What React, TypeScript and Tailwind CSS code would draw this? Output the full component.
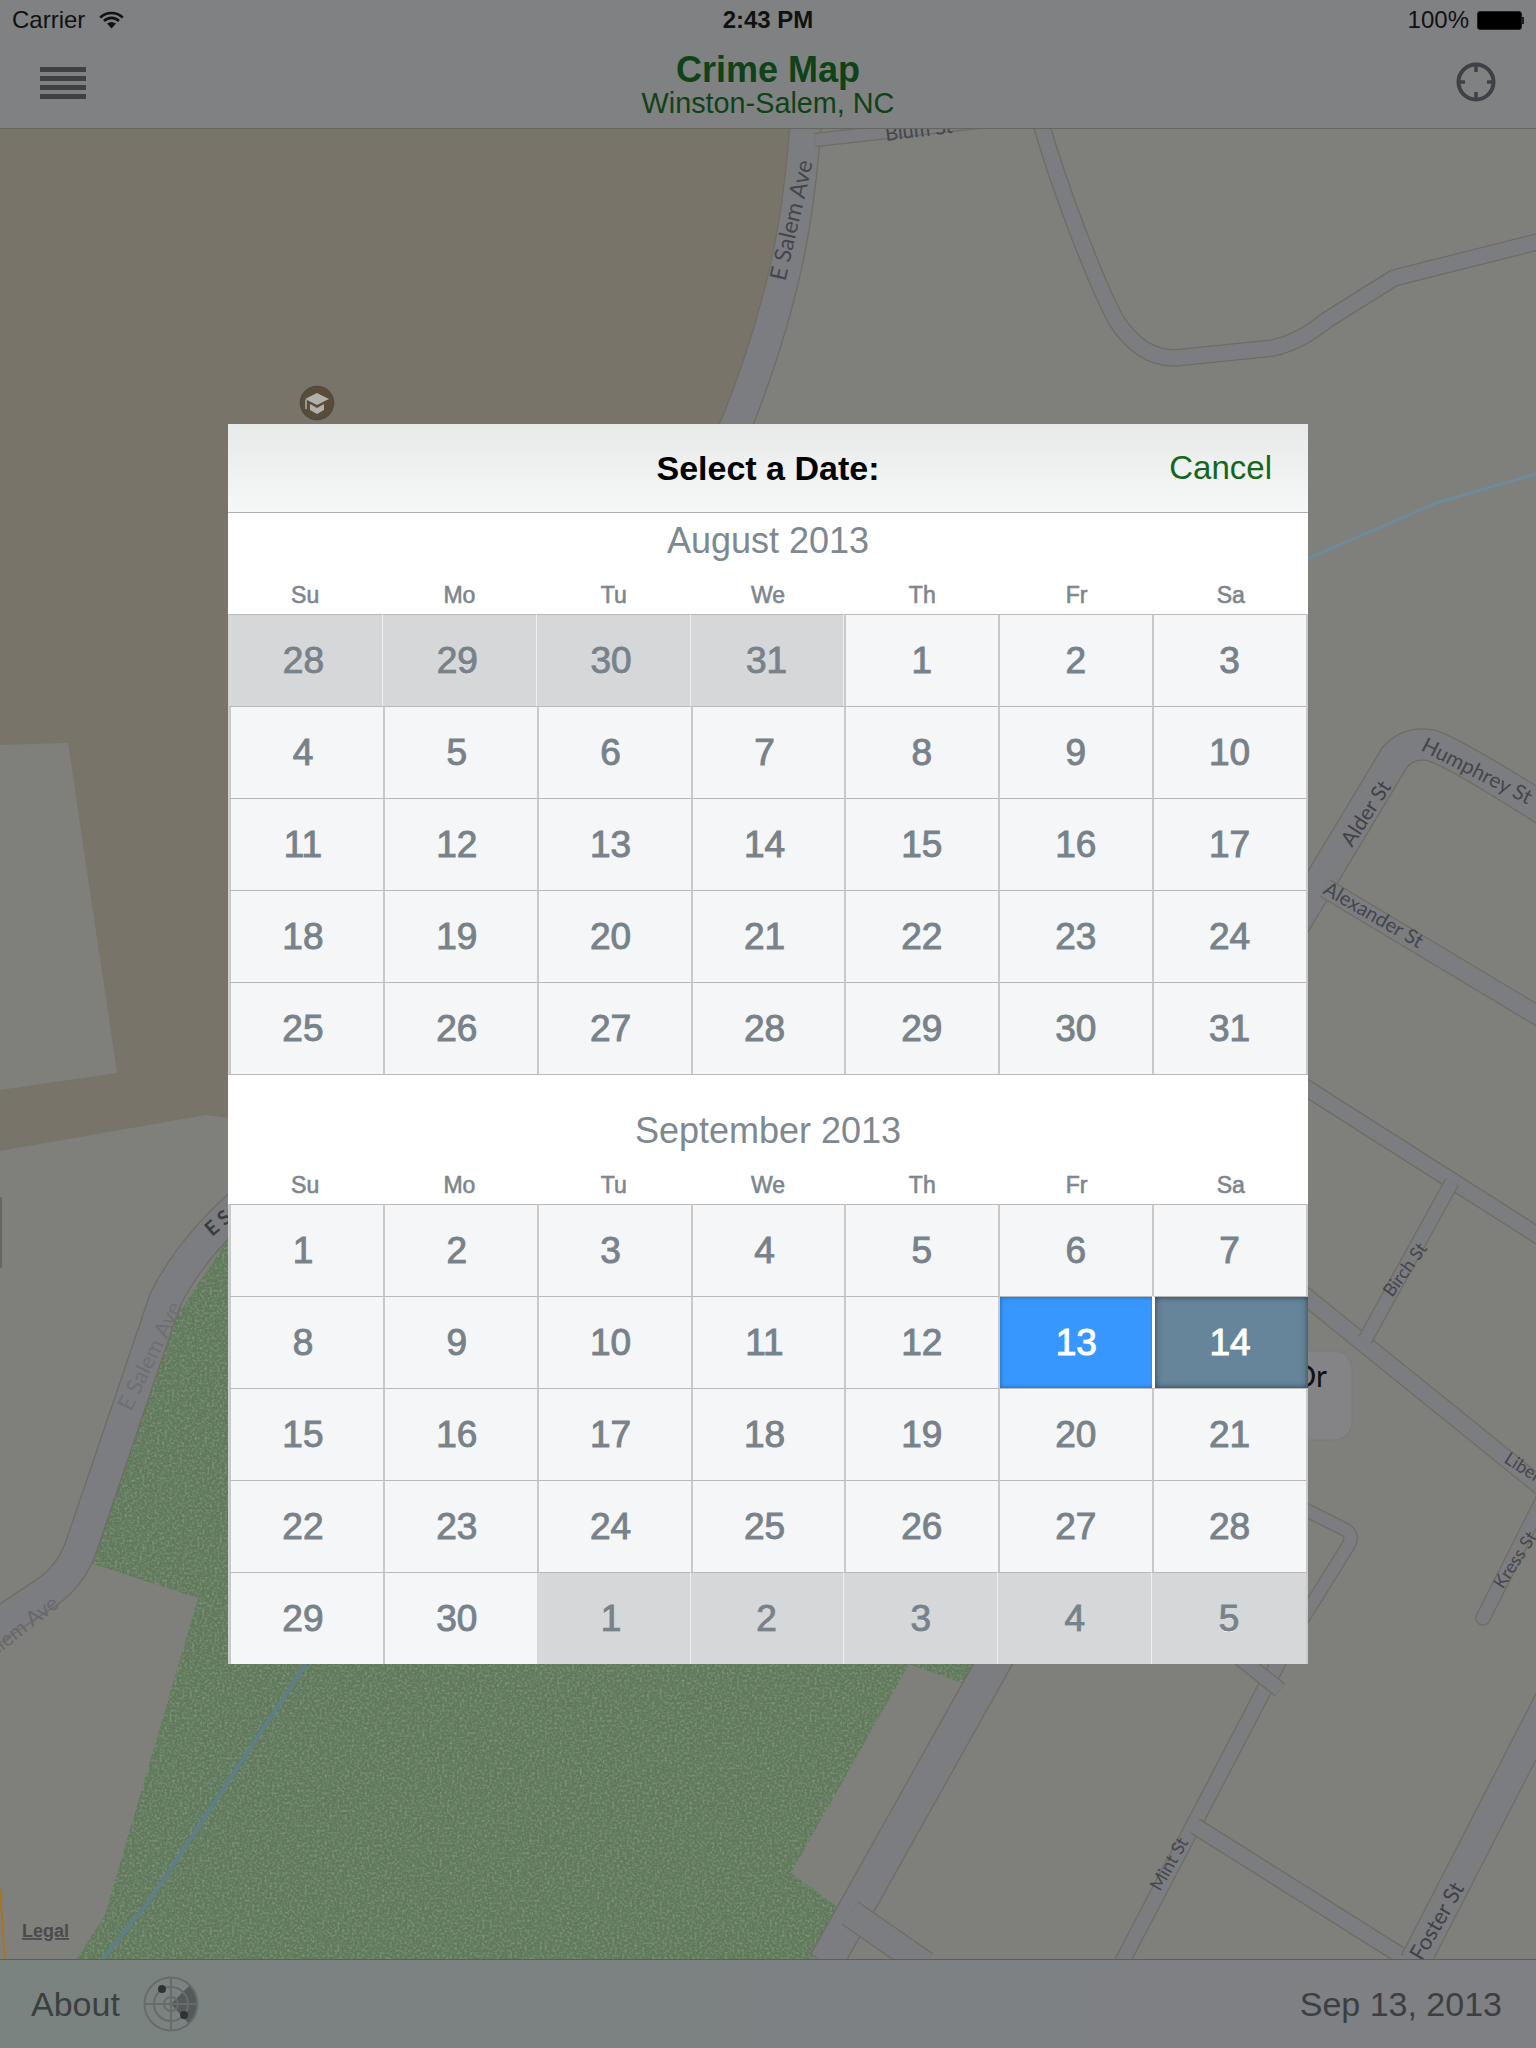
import React from 'react';

type CellKind = 'day' | 'out' | 'start' | 'end';

interface Cell {
  label: number;
  kind: CellKind;
}

const WEEKDAYS = ['Su', 'Mo', 'Tu', 'We', 'Th', 'Fr', 'Sa'];

// digits in the reference sit a touch left of centre, more so on the left side
const DAY_PAD = ['pr-[8px]', 'pr-[8px]', 'pr-[8px]', 'pr-[8px]', 'pr-[1px]', 'pr-[1px]', 'pr-[1px]'];
const OUT_PAD = ['pr-[4px]', 'pr-[4px]', 'pr-[4px]', 'pr-[1px]', 'pr-0', 'pr-0', 'pr-0'];

const range = (from: number, to: number, kind: CellKind = 'day'): Cell[] =>
  Array.from({ length: to - from + 1 }, (_, i) => ({ label: from + i, kind }));

const AUGUST: Cell[] = [...range(28, 31, 'out'), ...range(1, 31)];

const SEPTEMBER: Cell[] = [
  ...range(1, 12),
  { label: 13, kind: 'start' },
  { label: 14, kind: 'end' },
  ...range(15, 30),
  ...range(1, 5, 'out'),
];

const Road = ({ d, w, cap = 'butt' }: { d: string; w: number; cap?: 'butt' | 'round' }) => (
  <>
    <path d={d} fill="none" stroke="#6f6c64" strokeWidth={w + 2.5} strokeLinecap={cap} strokeLinejoin="round" />
    <path d={d} fill="none" stroke="#7c7d81" strokeWidth={w} strokeLinecap={cap} strokeLinejoin="round" />
  </>
);

const Label = ({
  x,
  y,
  r,
  size = 20,
  text,
  fill = '#44464c',
  anchor = 'start',
  bold = false,
}: {
  x: number;
  y: number;
  r: number;
  size?: number;
  text: string;
  fill?: string;
  anchor?: 'start' | 'middle' | 'end';
  bold?: boolean;
}) => (
  <text
    transform={`translate(${x} ${y}) rotate(${r})`}
    fontSize={size}
    fill={fill}
    textAnchor={anchor}
    fontWeight={bold ? 700 : 400}
    className="font-['Lato',sans-serif]"
  >
    {text}
  </text>
);

const GREEN = '228,1239 173,1322 93,1564 198,1598 105,1915 76,1960 816,1960 839,1908 791,1873 909,1664 962,1683 1000,1664 1000,1200';

// dimmed map that sits behind everything
const MapLayer = () => (
  <svg className="absolute inset-0" width={1536} height={2048} viewBox="0 0 1536 2048">
    <defs>
      <filter id="grass" x="0" y="0" width="100%" height="100%">
        <feTurbulence type="fractalNoise" baseFrequency="0.4" numOctaves={2} seed={4} result="n" />
        <feColorMatrix in="n" type="matrix" values="0 0 0 0 1  0 0 0 0 1  0 0 0 0 1  0 0 0 0.3 -0.13" result="w" />
        <feComposite in="w" in2="SourceGraphic" operator="in" result="speck" />
        <feMerge>
          <feMergeNode in="SourceGraphic" />
          <feMergeNode in="speck" />
        </feMerge>
      </filter>
    </defs>
    <rect width={1536} height={2048} fill="#7f7f7b" />
    <polygon points="0,128 812,128 790,300 740,424 700,520 400,1000 228,1118 206,1115 0,1151" fill="#79746a" />
    <polygon points="0,745 68,743 117,1073 0,1090" fill="#7f7f7b" />
    <rect x={0} y={1197} width={2} height={71} fill="#6a655e" />

    <polygon points={GREEN} fill="#5f795a" filter="url(#grass)" />
    <path d="M306 1664 L150 1900 L102 1960" fill="none" stroke="#5e7e88" strokeWidth={4} />
    <path d="M0 1890 L5 1960" fill="none" stroke="#a8761f" strokeWidth={2} />
    <path d="M1300 562 L1436 503 L1536 474" fill="none" stroke="#6f8a99" strokeWidth={3} />

    <Road d="M806 120 C800 200 790 290 737 423 L700 500" w={30} />
    <Road d="M815 140 L1030 116" w={12} />
    <Road d="M1040 120 C1060 190 1095 280 1116 320 Q1140 358 1175 358 L1273 348 Q1300 342 1327 320 L1394 278 L1545 240" w={15} />
    <Road d="M1280 948 L1395 757 Q1408 742 1430 745 Q1450 750 1545 810" w={30} />
    <Road d="M1325 888 L1545 1020" w={18} />
    <Road d="M1300 1084 L1545 1240" w={15} />
    <Road d="M1300 1292 L1545 1490" w={16} />
    <Road d="M1452 1182 L1365 1340" w={13} />
    <Road d="M1545 1495 L1483 1618" w={13} cap="round" />
    <Road d="M1300 1507 L1346 1530 Q1354 1536 1348 1546 L1292 1636" w={12} />
    <Road d="M240 1205 Q190 1250 165 1300 L80 1550 Q70 1575 50 1590 L-10 1630" w={31} />
    <Road d="M998 1655 L826 1962" w={33} />
    <Road d="M850 1913 L925 1965" w={26} />
    <Road d="M1285 1650 L1122 1962" w={14} />
    <Road d="M1195 1826 L1400 1955" w={15} />
    <Road d="M1230 1650 L1280 1690" w={14} />
    <Road d="M1560 1680 L1415 1962" w={29} />

    <Label x={886} y={141} r={-7} size={20} text="Blum St" />
    <Label x={799} y={222} r={-77} size={23} anchor="middle" text="E Salem Ave" />
    <Label x={1420} y={750} r={27} size={21} text="Humphrey St" />
    <Label x={1352} y={848} r={-57} size={21} fill="#3f4147" text="Alder St" />
    <Label x={1322} y={893} r={30} size={20} text="Alexander St" />
    <Label x={1392} y={1298} r={-54} size={18} text="Birch St" />
    <Label x={1503} y={1462} r={32} size={18} text="Liberty St" />
    <Label x={1503} y={1590} r={-57} size={18} text="Kress St" />
    <Label x={1160} y={1892} r={-60} size={18} text="Mint St" />
    <Label x={1422} y={1962} r={-60} size={22} fill="#3f4147" text="Foster St" />
    <Label x={131} y={1412} r={-64} size={22} fill="#6d6f74" text="E Salem Ave" />
    <Label x={60} y={1606} r={-38} size={21} fill="#66686d" anchor="end" text="E Salem Ave" />
    <Label x={212} y={1237} r={-40} size={20} fill="#3a3c42" bold text="E Salem Ave" />

    <rect x={1270} y={1351} width={82} height={89} rx={18} fill="#848486" stroke="#7a7a7c" />
    <text x={1327} y={1387} fontSize={30} fill="#111" textAnchor="end" className="font-['Lato',sans-serif]">
      Or
    </text>

    <text x={22} y={1937} fontSize={18} fontWeight={700} fill="#4a4b4d" textDecoration="underline" className="font-['Liberation_Sans',sans-serif]">
      Legal
    </text>

    <circle cx={317} cy={403} r={16.5} fill="#5b4c37" stroke="#4c4a44" strokeWidth={1.5} />
    <path d="M317 393 L329 399 L317 405 L305 399 Z" fill="#b0b0ac" />
    <path d="M310 404 L317 408 L324 404 L324 410 L317 414 L310 410 Z" fill="#b0b0ac" />
    <path d="M306 400 L306 409" stroke="#b0b0ac" strokeWidth={1.5} />
  </svg>
);

const WifiIcon = () => (
  <svg width={25} height={18} viewBox="0 0 25 18">
    <path d="M1.2 6.6 A16 16 0 0 1 23.8 6.6" fill="none" stroke="#111" strokeWidth={2.6} />
    <path d="M5 10 A10.5 10.5 0 0 1 20 10" fill="none" stroke="#111" strokeWidth={2.6} />
    <path d="M8 12.6 Q12.5 9.6 17 12.6 L12.5 17.6 Z" fill="#111" />
  </svg>
);

const MenuIcon = () => (
  <div className="mb-[2px] flex w-[46px] flex-col gap-1">
    <div className="h-[5px] bg-[#3f4043]" />
    <div className="h-[5px] bg-[#3f4043]" />
    <div className="h-[5px] bg-[#3f4043]" />
    <div className="h-[5px] bg-[#3f4043]" />
  </div>
);

const LocateIcon = () => (
  <svg width={40} height={40} viewBox="0 0 40 40" fill="none" stroke="#404147" strokeWidth={4}>
    <circle cx={20} cy={20} r={17.5} />
    <path d="M20 3 V10 M20 30 V37 M3 20 H9 M31 20 H37" strokeWidth={3.5} />
  </svg>
);

const RadarIcon = () => (
  <svg width={56} height={56} viewBox="0 0 56 56" fill="none" stroke="#666b6c" strokeWidth={2}>
    <path d="M28 28 L47 9 A27 27 0 0 1 46 48 Z" fill="#55595a" stroke="none" />
    <circle cx={28} cy={28} r={26.5} />
    <circle cx={28} cy={28} r={17} />
    <circle cx={28} cy={28} r={7} />
    <path d="M28 1 V55 M1 28 H55" />
    <circle cx={19} cy={13} r={4} fill="#2f3235" stroke="none" />
    <circle cx={41} cy={39} r={4} fill="#2f3235" stroke="none" />
  </svg>
);

const DayCell = ({ cell, col }: { cell: Cell; col: number }) => {
  const base =
    'flex h-[92px] items-center justify-center border-t border-t-[#b9b9b9] text-[37px] [-webkit-text-stroke:1px_currentColor]';
  if (cell.kind === 'start') {
    return (
      <div className={`${base} relative z-10 w-[calc(100%+2px)] border-l-2 border-l-[#c9c9c9] bg-[#3797fe] pr-[2px] text-white shadow-[inset_0_0_4px_#1c5e9e]`}>
        {cell.label}
      </div>
    );
  }
  if (cell.kind === 'end') {
    return (
      <div className={`${base} relative z-10 w-[calc(100%+2px)] border-l-[3px] border-l-white bg-[#66859b] pr-[3px] text-white shadow-[inset_0_0_6px_#2a3a48]`}>
        {cell.label}
      </div>
    );
  }
  if (cell.kind === 'out') {
    return (
      <div className={`${base} ${col < 6 ? 'border-r border-r-white/60' : ''} ${OUT_PAD[col]} bg-[#d6d7d9] text-[#78828a] [text-shadow:0_1px_0_#fff]`}>
        {cell.label}
      </div>
    );
  }
  return (
    <div className={`${base} ${DAY_PAD[col]} border-l-2 border-l-[#c9c9c9] bg-[#f5f6f8] text-[#78828a] [text-shadow:0_1px_0_#fff]`}>
      {cell.label}
    </div>
  );
};

const Month = ({ title, cells, className }: { title: string; cells: Cell[]; className: string }) => (
  <div className={className}>
    <div className="flex h-[56px] items-center justify-center text-[36px] text-[#7e8890]">{title}</div>
    <div className="grid h-[45px] grid-cols-7 pt-[10px] text-center text-[23px] leading-[32px] text-[#7d868e] [-webkit-text-stroke:0.6px_currentColor]">
      {WEEKDAYS.map((d) => (
        <div key={d}>{d}</div>
      ))}
    </div>
    <div className="grid grid-cols-7 border-r-2 border-r-[#c9c9c9] bg-[#d0d1d3] pl-[1px]">
      {cells.map((cell, i) => (
        <DayCell key={i} cell={cell} col={i % 7} />
      ))}
    </div>
  </div>
);

export default function App() {
  return (
    <div className="relative h-[2048px] w-[1536px] overflow-hidden font-['Liberation_Sans',Arial,sans-serif]">
      <MapLayer />
      <div className="relative flex h-full flex-col">
        <header className="border-b border-b-[#666660] bg-[#808183]">
          <div className="grid h-10 grid-cols-3 items-center px-3 text-[24px] text-[#111]">
            <div className="flex items-center gap-[14px]">
              Carrier
              <WifiIcon />
            </div>
            <div className="text-center font-bold">2:43 PM</div>
            <div className="flex items-center justify-end gap-2">
              100%
              <div className="flex items-center">
                <div className="h-[19px] w-[45px] rounded-[3px] border border-[#222] bg-black" />
                <div className="h-[7px] w-[2px] bg-[#222]" />
              </div>
            </div>
          </div>
          <div className="grid h-[88px] grid-cols-[1fr_auto_1fr] items-center px-10">
            <MenuIcon />
            <div className="pt-[2px] text-center text-[#0f4216]">
              <div className="text-[36px] leading-[36px] font-bold">Crime Map</div>
              <div className="text-[28.8px] leading-[30px]">Winston-Salem, NC</div>
            </div>
            <div className="mb-[4px] flex justify-end">
              <LocateIcon />
            </div>
          </div>
        </header>

        <main className="flex flex-1 justify-center pt-[295px]">
          <div className="h-fit w-[1080px] bg-white">
            <div className="relative flex h-[89px] items-center justify-center border-b border-b-[#b0b0b0] bg-gradient-to-b from-[#e8e9e9] to-[#f6f7f7]">
              <div className="text-[34px] font-bold text-black">Select a Date:</div>
              <div className="absolute right-9 text-[33px] text-[#14661a]">Cancel</div>
            </div>
            <Month title="August 2013" cells={AUGUST} className="border-b border-b-[#b9b9b9]" />
            <Month title="September 2013" cells={SEPTEMBER} className="pt-[28px]" />
          </div>
        </main>

        <footer className="flex h-[89px] items-center justify-between border-t border-t-[#5c6058] bg-gradient-to-r from-[#7a8380] via-[#7d8183] to-[#7f8083] pr-[34px] pl-[31px] text-[34px] text-[#3c3f42]">
          <div className="flex items-center gap-[23px]">
            About
            <RadarIcon />
          </div>
          <div>Sep 13, 2013</div>
        </footer>
      </div>
    </div>
  );
}
